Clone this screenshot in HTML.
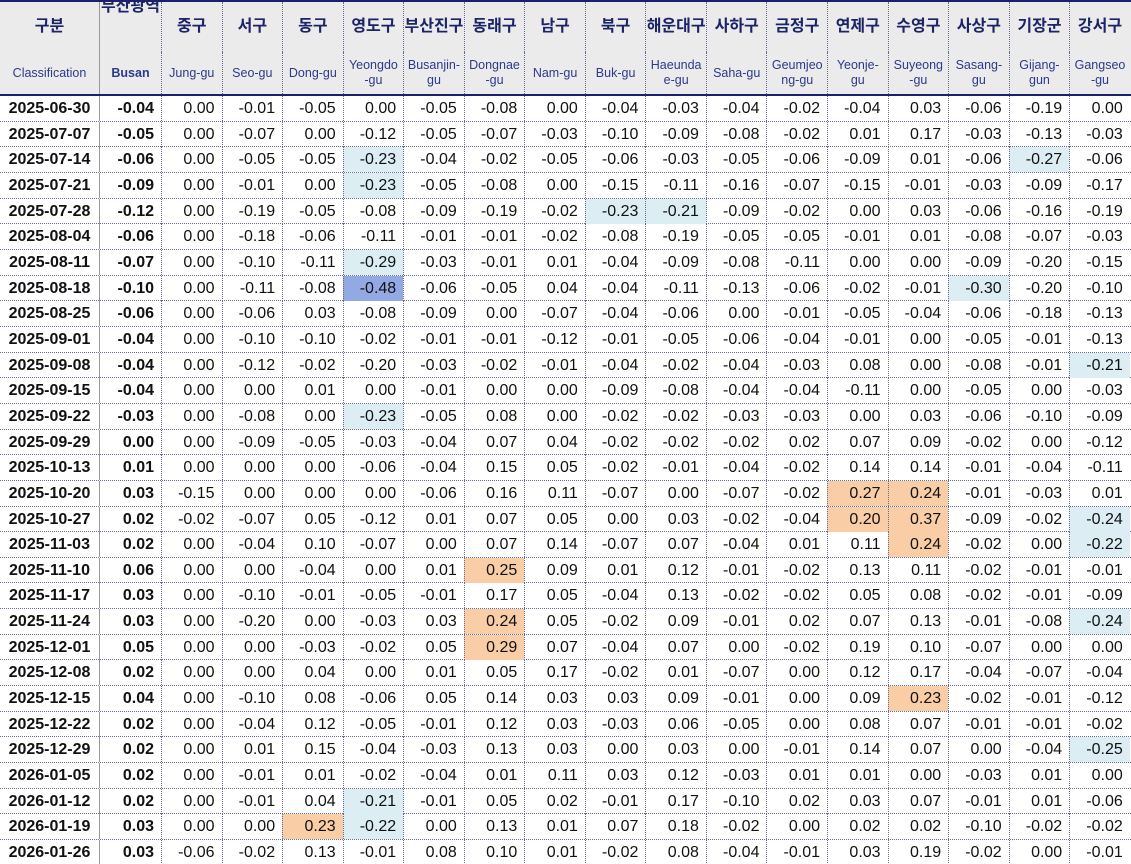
<!DOCTYPE html>
<html><head><meta charset="utf-8">
<style>
html,body{margin:0;padding:0;background:#fff;}
html{overflow:hidden;height:864px;}
body{width:1131px;height:864px;overflow:hidden;position:relative;}
table,thead,tbody{display:block;width:1131px;}
table{font-family:"Liberation Sans","Noto Sans CJK KR",sans-serif;}
tr{display:flex;box-sizing:border-box;}
td,th{display:block;flex:none;box-sizing:border-box;padding:0;overflow:hidden;white-space:nowrap;width:60.56px;border-left:1px dotted #6a6a8e;}
td:nth-child(1),th:nth-child(1){width:100px;border-left:none;border-right:1px solid #999;}
td:nth-child(2),th:nth-child(2){width:61px;border-left:none;}
thead tr{background:#ebebeb;}
thead tr.k{height:52px;border-top:2px solid #1a1f6e;}
thead tr.k th{color:#1a2466;font-size:16px;font-weight:bold;line-height:50px;text-align:center;}
thead tr.k th.b{line-height:14px;margin-top:-2px;}
thead tr.e{height:44px;border-bottom:2px solid #1a1f6e;}
thead tr.e th{color:#2b3a8a;font-size:12.5px;font-weight:normal;line-height:15px;white-space:normal;display:flex;align-items:center;justify-content:center;text-align:center;}
tbody tr{height:25.66px;border-bottom:1px dotted #6a6a8e;}
tbody td{line-height:26px;height:25px;font-size:16px;color:#111;text-align:right;padding-right:7px;}
tbody td:first-child{font-weight:bold;text-align:center;padding-right:0;}
tbody td:nth-child(2){font-weight:bold;}
.l{background:#dcedf4;}
.d{background:#93a9e4;}
.o{background:#f9cda6;}
</style></head><body>
<table>
<thead>
<tr class="k"><th>구분</th><th class="b">부산광역</th><th>중구</th><th>서구</th><th>동구</th><th>영도구</th><th>부산진구</th><th>동래구</th><th>남구</th><th>북구</th><th>해운대구</th><th>사하구</th><th>금정구</th><th>연제구</th><th>수영구</th><th>사상구</th><th>기장군</th><th>강서구</th></tr>
<tr class="e"><th>Classification</th><th><b>Busan</b></th><th>Jung-gu</th><th>Seo-gu</th><th>Dong-gu</th><th>Yeongdo<br>-gu</th><th>Busanjin-<br>gu</th><th>Dongnae<br>-gu</th><th>Nam-gu</th><th>Buk-gu</th><th>Haeunda<br>e-gu</th><th>Saha-gu</th><th>Geumjeo<br>ng-gu</th><th>Yeonje-<br>gu</th><th>Suyeong<br>-gu</th><th>Sasang-<br>gu</th><th>Gijang-<br>gun</th><th>Gangseo<br>-gu</th></tr>
</thead>
<tbody>
<tr><td>2025-06-30</td><td>-0.04</td><td>0.00</td><td>-0.01</td><td>-0.05</td><td>0.00</td><td>-0.05</td><td>-0.08</td><td>0.00</td><td>-0.04</td><td>-0.03</td><td>-0.04</td><td>-0.02</td><td>-0.04</td><td>0.03</td><td>-0.06</td><td>-0.19</td><td>0.00</td></tr>
<tr><td>2025-07-07</td><td>-0.05</td><td>0.00</td><td>-0.07</td><td>0.00</td><td>-0.12</td><td>-0.05</td><td>-0.07</td><td>-0.03</td><td>-0.10</td><td>-0.09</td><td>-0.08</td><td>-0.02</td><td>0.01</td><td>0.17</td><td>-0.03</td><td>-0.13</td><td>-0.03</td></tr>
<tr><td>2025-07-14</td><td>-0.06</td><td>0.00</td><td>-0.05</td><td>-0.05</td><td class="l">-0.23</td><td>-0.04</td><td>-0.02</td><td>-0.05</td><td>-0.06</td><td>-0.03</td><td>-0.05</td><td>-0.06</td><td>-0.09</td><td>0.01</td><td>-0.06</td><td class="l">-0.27</td><td>-0.06</td></tr>
<tr><td>2025-07-21</td><td>-0.09</td><td>0.00</td><td>-0.01</td><td>0.00</td><td class="l">-0.23</td><td>-0.05</td><td>-0.08</td><td>0.00</td><td>-0.15</td><td>-0.11</td><td>-0.16</td><td>-0.07</td><td>-0.15</td><td>-0.01</td><td>-0.03</td><td>-0.09</td><td>-0.17</td></tr>
<tr><td>2025-07-28</td><td>-0.12</td><td>0.00</td><td>-0.19</td><td>-0.05</td><td>-0.08</td><td>-0.09</td><td>-0.19</td><td>-0.02</td><td class="l">-0.23</td><td class="l">-0.21</td><td>-0.09</td><td>-0.02</td><td>0.00</td><td>0.03</td><td>-0.06</td><td>-0.16</td><td>-0.19</td></tr>
<tr><td>2025-08-04</td><td>-0.06</td><td>0.00</td><td>-0.18</td><td>-0.06</td><td>-0.11</td><td>-0.01</td><td>-0.01</td><td>-0.02</td><td>-0.08</td><td>-0.19</td><td>-0.05</td><td>-0.05</td><td>-0.01</td><td>0.01</td><td>-0.08</td><td>-0.07</td><td>-0.03</td></tr>
<tr><td>2025-08-11</td><td>-0.07</td><td>0.00</td><td>-0.10</td><td>-0.11</td><td class="l">-0.29</td><td>-0.03</td><td>-0.01</td><td>0.01</td><td>-0.04</td><td>-0.09</td><td>-0.08</td><td>-0.11</td><td>0.00</td><td>0.00</td><td>-0.09</td><td>-0.20</td><td>-0.15</td></tr>
<tr><td>2025-08-18</td><td>-0.10</td><td>0.00</td><td>-0.11</td><td>-0.08</td><td class="d">-0.48</td><td>-0.06</td><td>-0.05</td><td>0.04</td><td>-0.04</td><td>-0.11</td><td>-0.13</td><td>-0.06</td><td>-0.02</td><td>-0.01</td><td class="l">-0.30</td><td>-0.20</td><td>-0.10</td></tr>
<tr><td>2025-08-25</td><td>-0.06</td><td>0.00</td><td>-0.06</td><td>0.03</td><td>-0.08</td><td>-0.09</td><td>0.00</td><td>-0.07</td><td>-0.04</td><td>-0.06</td><td>0.00</td><td>-0.01</td><td>-0.05</td><td>-0.04</td><td>-0.06</td><td>-0.18</td><td>-0.13</td></tr>
<tr><td>2025-09-01</td><td>-0.04</td><td>0.00</td><td>-0.10</td><td>-0.10</td><td>-0.02</td><td>-0.01</td><td>-0.01</td><td>-0.12</td><td>-0.01</td><td>-0.05</td><td>-0.06</td><td>-0.04</td><td>-0.01</td><td>0.00</td><td>-0.05</td><td>-0.01</td><td>-0.13</td></tr>
<tr><td>2025-09-08</td><td>-0.04</td><td>0.00</td><td>-0.12</td><td>-0.02</td><td>-0.20</td><td>-0.03</td><td>-0.02</td><td>-0.01</td><td>-0.04</td><td>-0.02</td><td>-0.04</td><td>-0.03</td><td>0.08</td><td>0.00</td><td>-0.08</td><td>-0.01</td><td class="l">-0.21</td></tr>
<tr><td>2025-09-15</td><td>-0.04</td><td>0.00</td><td>0.00</td><td>0.01</td><td>0.00</td><td>-0.01</td><td>0.00</td><td>0.00</td><td>-0.09</td><td>-0.08</td><td>-0.04</td><td>-0.04</td><td>-0.11</td><td>0.00</td><td>-0.05</td><td>0.00</td><td>-0.03</td></tr>
<tr><td>2025-09-22</td><td>-0.03</td><td>0.00</td><td>-0.08</td><td>0.00</td><td class="l">-0.23</td><td>-0.05</td><td>0.08</td><td>0.00</td><td>-0.02</td><td>-0.02</td><td>-0.03</td><td>-0.03</td><td>0.00</td><td>0.03</td><td>-0.06</td><td>-0.10</td><td>-0.09</td></tr>
<tr><td>2025-09-29</td><td>0.00</td><td>0.00</td><td>-0.09</td><td>-0.05</td><td>-0.03</td><td>-0.04</td><td>0.07</td><td>0.04</td><td>-0.02</td><td>-0.02</td><td>-0.02</td><td>0.02</td><td>0.07</td><td>0.09</td><td>-0.02</td><td>0.00</td><td>-0.12</td></tr>
<tr><td>2025-10-13</td><td>0.01</td><td>0.00</td><td>0.00</td><td>0.00</td><td>-0.06</td><td>-0.04</td><td>0.15</td><td>0.05</td><td>-0.02</td><td>-0.01</td><td>-0.04</td><td>-0.02</td><td>0.14</td><td>0.14</td><td>-0.01</td><td>-0.04</td><td>-0.11</td></tr>
<tr><td>2025-10-20</td><td>0.03</td><td>-0.15</td><td>0.00</td><td>0.00</td><td>0.00</td><td>-0.06</td><td>0.16</td><td>0.11</td><td>-0.07</td><td>0.00</td><td>-0.07</td><td>-0.02</td><td class="o">0.27</td><td class="o">0.24</td><td>-0.01</td><td>-0.03</td><td>0.01</td></tr>
<tr><td>2025-10-27</td><td>0.02</td><td>-0.02</td><td>-0.07</td><td>0.05</td><td>-0.12</td><td>0.01</td><td>0.07</td><td>0.05</td><td>0.00</td><td>0.03</td><td>-0.02</td><td>-0.04</td><td class="o">0.20</td><td class="o">0.37</td><td>-0.09</td><td>-0.02</td><td class="l">-0.24</td></tr>
<tr><td>2025-11-03</td><td>0.02</td><td>0.00</td><td>-0.04</td><td>0.10</td><td>-0.07</td><td>0.00</td><td>0.07</td><td>0.14</td><td>-0.07</td><td>0.07</td><td>-0.04</td><td>0.01</td><td>0.11</td><td class="o">0.24</td><td>-0.02</td><td>0.00</td><td class="l">-0.22</td></tr>
<tr><td>2025-11-10</td><td>0.06</td><td>0.00</td><td>0.00</td><td>-0.04</td><td>0.00</td><td>0.01</td><td class="o">0.25</td><td>0.09</td><td>0.01</td><td>0.12</td><td>-0.01</td><td>-0.02</td><td>0.13</td><td>0.11</td><td>-0.02</td><td>-0.01</td><td>-0.01</td></tr>
<tr><td>2025-11-17</td><td>0.03</td><td>0.00</td><td>-0.10</td><td>-0.01</td><td>-0.05</td><td>-0.01</td><td>0.17</td><td>0.05</td><td>-0.04</td><td>0.13</td><td>-0.02</td><td>-0.02</td><td>0.05</td><td>0.08</td><td>-0.02</td><td>-0.01</td><td>-0.09</td></tr>
<tr><td>2025-11-24</td><td>0.03</td><td>0.00</td><td>-0.20</td><td>0.00</td><td>-0.03</td><td>0.03</td><td class="o">0.24</td><td>0.05</td><td>-0.02</td><td>0.09</td><td>-0.01</td><td>0.02</td><td>0.07</td><td>0.13</td><td>-0.01</td><td>-0.08</td><td class="l">-0.24</td></tr>
<tr><td>2025-12-01</td><td>0.05</td><td>0.00</td><td>0.00</td><td>-0.03</td><td>-0.02</td><td>0.05</td><td class="o">0.29</td><td>0.07</td><td>-0.04</td><td>0.07</td><td>0.00</td><td>-0.02</td><td>0.19</td><td>0.10</td><td>-0.07</td><td>0.00</td><td>0.00</td></tr>
<tr><td>2025-12-08</td><td>0.02</td><td>0.00</td><td>0.00</td><td>0.04</td><td>0.00</td><td>0.01</td><td>0.05</td><td>0.17</td><td>-0.02</td><td>0.01</td><td>-0.07</td><td>0.00</td><td>0.12</td><td>0.17</td><td>-0.04</td><td>-0.07</td><td>-0.04</td></tr>
<tr><td>2025-12-15</td><td>0.04</td><td>0.00</td><td>-0.10</td><td>0.08</td><td>-0.06</td><td>0.05</td><td>0.14</td><td>0.03</td><td>0.03</td><td>0.09</td><td>-0.01</td><td>0.00</td><td>0.09</td><td class="o">0.23</td><td>-0.02</td><td>-0.01</td><td>-0.12</td></tr>
<tr><td>2025-12-22</td><td>0.02</td><td>0.00</td><td>-0.04</td><td>0.12</td><td>-0.05</td><td>-0.01</td><td>0.12</td><td>0.03</td><td>-0.03</td><td>0.06</td><td>-0.05</td><td>0.00</td><td>0.08</td><td>0.07</td><td>-0.01</td><td>-0.01</td><td>-0.02</td></tr>
<tr><td>2025-12-29</td><td>0.02</td><td>0.00</td><td>0.01</td><td>0.15</td><td>-0.04</td><td>-0.03</td><td>0.13</td><td>0.03</td><td>0.00</td><td>0.03</td><td>0.00</td><td>-0.01</td><td>0.14</td><td>0.07</td><td>0.00</td><td>-0.04</td><td class="l">-0.25</td></tr>
<tr><td>2026-01-05</td><td>0.02</td><td>0.00</td><td>-0.01</td><td>0.01</td><td>-0.02</td><td>-0.04</td><td>0.01</td><td>0.11</td><td>0.03</td><td>0.12</td><td>-0.03</td><td>0.01</td><td>0.01</td><td>0.00</td><td>-0.03</td><td>0.01</td><td>0.00</td></tr>
<tr><td>2026-01-12</td><td>0.02</td><td>0.00</td><td>-0.01</td><td>0.04</td><td class="l">-0.21</td><td>-0.01</td><td>0.05</td><td>0.02</td><td>-0.01</td><td>0.17</td><td>-0.10</td><td>0.02</td><td>0.03</td><td>0.07</td><td>-0.01</td><td>0.01</td><td>-0.06</td></tr>
<tr><td>2026-01-19</td><td>0.03</td><td>0.00</td><td>0.00</td><td class="o">0.23</td><td class="l">-0.22</td><td>0.00</td><td>0.13</td><td>0.01</td><td>0.07</td><td>0.18</td><td>-0.02</td><td>0.00</td><td>0.02</td><td>0.02</td><td>-0.10</td><td>-0.02</td><td>-0.02</td></tr>
<tr><td>2026-01-26</td><td>0.03</td><td>-0.06</td><td>-0.02</td><td>0.13</td><td>-0.01</td><td>0.08</td><td>0.10</td><td>0.01</td><td>-0.02</td><td>0.08</td><td>-0.04</td><td>-0.01</td><td>0.03</td><td>0.19</td><td>-0.02</td><td>0.00</td><td>-0.01</td></tr>
</tbody>
</table>
</body></html>
